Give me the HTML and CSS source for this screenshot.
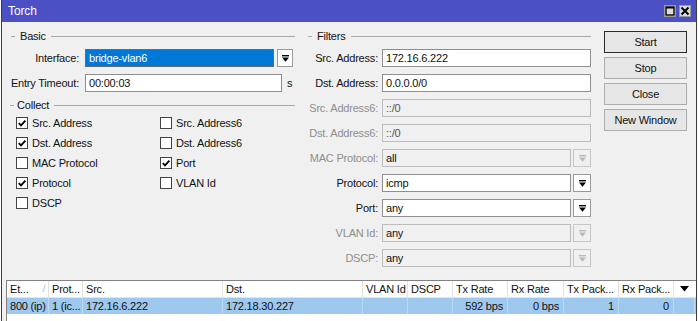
FILE: index.html
```html
<!DOCTYPE html>
<html lang="en">
<head>
    <meta charset="UTF-8">
    <meta name="viewport" content="width=device-width, initial-scale=1.0">
    <title>Torch</title>
    <link rel="stylesheet" href="styles.css">
</head>
<body>
    <div class="window">
        <div class="titlebar">
            <span class="title">Torch</span>
            <div class="title-buttons">
                <span class="tbtn"><svg width="10" height="10" viewBox="0 0 10 10"><rect x="1" y="1" width="8" height="8" fill="none" stroke="#000" stroke-width="1.4"/><line x1="1" y1="1.8" x2="9" y2="1.8" stroke="#000" stroke-width="1.4"/></svg></span>
                <span class="tbtn"><svg width="10" height="10" viewBox="0 0 10 10"><path d="M1.5 1.5 L8.5 8.5 M8.5 1.5 L1.5 8.5" stroke="#000" stroke-width="2"/></svg></span>
            </div>
        </div>

        <div class="content">
            <div class="top">
                <!-- Basic + Collect -->
                <div class="left">
                    <div class="group-title"><span>Basic</span></div>
                    <div class="form basic">
                        <label>Interface:</label>
                        <div class="field">
                            <div class="input selected iface">bridge-vlan6</div>
                            <span class="drop"><svg width="9" height="9" viewBox="0 0 9 9"><rect x="1" y="1" width="7" height="1.4"/><path d="M1 3.4 H8 L4.5 7.8 Z"/></svg></span>
                        </div>
                        <label>Entry Timeout:</label>
                        <div class="field">
                            <div class="input timeout">00:00:03</div>
                            <span class="unit">s</span>
                        </div>
                    </div>

                    <div class="group-title collect"><span>Collect</span></div>
                    <div class="checks">
                        <div class="check"><span class="box"><svg width="10" height="10" viewBox="0 0 10 10"><path d="M1.8 5.2 L4 7.4 L8.4 2.6" fill="none" stroke="#000" stroke-width="1.8"/></svg></span>Src. Address</div>
                        <div class="check"><span class="box"></span>Src. Address6</div>
                        <div class="check"><span class="box"><svg width="10" height="10" viewBox="0 0 10 10"><path d="M1.8 5.2 L4 7.4 L8.4 2.6" fill="none" stroke="#000" stroke-width="1.8"/></svg></span>Dst. Address</div>
                        <div class="check"><span class="box"></span>Dst. Address6</div>
                        <div class="check"><span class="box"></span>MAC Protocol</div>
                        <div class="check"><span class="box"><svg width="10" height="10" viewBox="0 0 10 10"><path d="M1.8 5.2 L4 7.4 L8.4 2.6" fill="none" stroke="#000" stroke-width="1.8"/></svg></span>Port</div>
                        <div class="check"><span class="box"><svg width="10" height="10" viewBox="0 0 10 10"><path d="M1.8 5.2 L4 7.4 L8.4 2.6" fill="none" stroke="#000" stroke-width="1.8"/></svg></span>Protocol</div>
                        <div class="check"><span class="box"></span>VLAN Id</div>
                        <div class="check"><span class="box"></span>DSCP</div>
                    </div>
                </div>

                <!-- Filters -->
                <div class="filters">
                    <div class="group-title"><span>Filters</span></div>
                    <div class="form filter-form">
                        <label>Src. Address:</label>
                        <div class="field"><div class="input">172.16.6.222</div></div>

                        <label>Dst. Address:</label>
                        <div class="field"><div class="input">0.0.0.0/0</div></div>

                        <label class="off">Src. Address6:</label>
                        <div class="field"><div class="input disabled">::/0</div></div>

                        <label class="off">Dst. Address6:</label>
                        <div class="field"><div class="input disabled">::/0</div></div>

                        <label class="off">MAC Protocol:</label>
                        <div class="field">
                            <div class="input disabled dark">all</div>
                            <span class="drop off"><svg width="9" height="9" viewBox="0 0 9 9"><rect x="1" y="1" width="7" height="1.4"/><path d="M1 3.4 H8 L4.5 7.8 Z"/></svg></span>
                        </div>

                        <label>Protocol:</label>
                        <div class="field">
                            <div class="input">icmp</div>
                            <span class="drop"><svg width="9" height="9" viewBox="0 0 9 9"><rect x="1" y="1" width="7" height="1.4"/><path d="M1 3.4 H8 L4.5 7.8 Z"/></svg></span>
                        </div>

                        <label>Port:</label>
                        <div class="field">
                            <div class="input">any</div>
                            <span class="drop"><svg width="9" height="9" viewBox="0 0 9 9"><rect x="1" y="1" width="7" height="1.4"/><path d="M1 3.4 H8 L4.5 7.8 Z"/></svg></span>
                        </div>

                        <label class="off">VLAN Id:</label>
                        <div class="field">
                            <div class="input disabled dark">any</div>
                            <span class="drop off"><svg width="9" height="9" viewBox="0 0 9 9"><rect x="1" y="1" width="7" height="1.4"/><path d="M1 3.4 H8 L4.5 7.8 Z"/></svg></span>
                        </div>

                        <label class="off">DSCP:</label>
                        <div class="field">
                            <div class="input disabled dark">any</div>
                            <span class="drop off"><svg width="9" height="9" viewBox="0 0 9 9"><rect x="1" y="1" width="7" height="1.4"/><path d="M1 3.4 H8 L4.5 7.8 Z"/></svg></span>
                        </div>
                    </div>
                </div>

                <!-- Buttons -->
                <div class="actions">
                    <button class="btn default">Start</button>
                    <button class="btn">Stop</button>
                    <button class="btn">Close</button>
                    <button class="btn">New Window</button>
                </div>
            </div>

            <!-- Results -->
            <div class="table">
                <div class="row head">
                    <div class="cell">Et...<span class="sort">/</span></div>
                    <div class="cell">Prot...</div>
                    <div class="cell">Src.</div>
                    <div class="cell">Dst.</div>
                    <div class="cell">VLAN Id</div>
                    <div class="cell">DSCP</div>
                    <div class="cell">Tx Rate</div>
                    <div class="cell">Rx Rate</div>
                    <div class="cell">Tx Pack...</div>
                    <div class="cell">Rx Pack...</div>
                    <div class="cell menu"><svg width="9" height="6" viewBox="0 0 9 6"><path d="M0 0 H9 L4.5 5.5 Z"/></svg></div>
                </div>
                <div class="row data">
                    <div class="cell">800 (ip)</div>
                    <div class="cell">1 (ic...</div>
                    <div class="cell">172.16.6.222</div>
                    <div class="cell">172.18.30.227</div>
                    <div class="cell"></div>
                    <div class="cell"></div>
                    <div class="cell num">592 bps</div>
                    <div class="cell num">0 bps</div>
                    <div class="cell num">1</div>
                    <div class="cell num">0</div>
                    <div class="cell"></div>
                </div>
            </div>
        </div>
    </div>
</body>
</html>
```

FILE: styles.css
```css
html, body {
    margin: 0;
    height: 100%;
    overflow: hidden;
    background: #fff;
}
body {
    font-family: "Liberation Sans", Arial, sans-serif;
    font-size: 11px;
    letter-spacing: -0.2px;
    color: #111;
}
.window {
    margin-left: 1px;
    width: 696px;
    height: 321px;
    box-sizing: border-box;
    border-left: 1px solid #3c3c3c;
    border-right: 1px solid #3c3c3c;
    background: #f0f0f0;
    overflow: hidden;
}
.titlebar {
    height: 22px;
    background: #4b50c4;
    display: flex;
    align-items: center;
    justify-content: space-between;
    padding: 0 5px 0 6px;
}
.title {
    color: #fff;
    font-size: 12px;
    letter-spacing: -0.1px;
}
.title-buttons {
    display: flex;
    gap: 3px;
}
.tbtn {
    width: 12px;
    height: 12px;
    box-sizing: border-box;
    background: #dcdcdc;
    border: 1px solid #9a9a9a;
    display: flex;
    align-items: center;
    justify-content: center;
}
.content {
    padding-top: 8px;
}
.top {
    display: flex;
    padding-left: 6px;
}
.left {
    width: 287px;
}
.filters {
    width: 286px;
    margin-left: 10px;
}
.actions {
    width: 83px;
    margin-left: 13px;
    margin-top: 1px;
    display: flex;
    flex-direction: column;
    gap: 4px;
}

/* group headings */
.group-title {
    display: flex;
    align-items: center;
    height: 12px;
    line-height: 12px;
}
.group-title::before {
    content: "";
    width: 4px;
    border-top: 1px solid #a8a8a8;
    margin: 0 5px 0 3px;
}
.group-title::after {
    content: "";
    flex: 1;
    border-top: 1px solid #a8a8a8;
    margin-left: 5px;
}
.group-title.collect {
    margin-top: 7px;
}
.group-title.collect::before {
    margin: 0 3px 0 2px;
}

/* forms */
.form {
    display: grid;
    row-gap: 7px;
    margin-top: 7px;
}
.basic {
    grid-template-columns: 71px 1fr;
    column-gap: 6px;
}
.filter-form {
    grid-template-columns: 73px 1fr;
    column-gap: 4px;
}
.form label {
    text-align: right;
    line-height: 18px;
    white-space: nowrap;
}
.form label.off {
    color: #8e8e8e;
}
.field {
    display: flex;
    align-items: center;
    height: 18px;
}
.input {
    flex: 1;
    height: 18px;
    box-sizing: border-box;
    border: 1px solid #8f8f8f;
    background: #fff;
    padding-left: 3px;
    line-height: 16px;
    white-space: nowrap;
}
.input.iface {
    flex: none;
    width: 189px;
}
.input.timeout {
    flex: none;
    width: 197px;
}
.input.selected {
    background: #0078d7;
    color: #fff;
    border-color: #6a6a6a;
}
.input.disabled {
    background: #f0f0f0;
    border-color: #bcbcbc;
    color: #555;
}
.input.disabled.dark {
    color: #111;
}
.unit {
    margin-left: 5px;
}
.drop {
    width: 18px;
    height: 18px;
    box-sizing: border-box;
    margin-left: 2px;
    border: 1px solid #9a9a9a;
    background: #fff;
    display: flex;
    align-items: center;
    justify-content: center;
    fill: #000;
}
.basic .drop {
    width: 16px;
    margin-left: 3px;
}
.drop.off {
    border-color: #c6c6c6;
    background: #f0f0f0;
    fill: #b8b8b8;
}

/* checkboxes */
.checks {
    display: grid;
    grid-template-columns: 144px 144px;
    grid-auto-rows: 20px;
    padding-left: 8px;
    margin-top: 2px;
}
.check {
    display: flex;
    align-items: center;
    gap: 4px;
}
.box {
    width: 12px;
    height: 12px;
    box-sizing: border-box;
    border: 1px solid #444;
    background: #fff;
    display: flex;
    align-items: center;
    justify-content: center;
}

/* buttons */
.btn {
    height: 22px;
    box-sizing: border-box;
    font-family: inherit;
    font-size: 11px;
    letter-spacing: -0.2px;
    color: #111;
    background: #e6e6e6;
    border: 1px solid #adadad;
    padding: 0;
}
.btn.default {
    border-color: #2b2b2b;
}

/* table */
.table {
    margin: 13px 0 0 4px;
    height: 41px;
    box-sizing: border-box;
    background: #fff;
    border-top: 1px solid #828282;
    border-left: 1px solid #828282;
}
.row {
    display: grid;
    grid-template-columns: 42px 34px 140px 140px 45px 45px 55px 56px 55px 55px 21px;
}
.row.head {
    height: 16px;
    border-bottom: 1px solid #e4e4e4;
}
.row.data {
    height: 16px;
    background: #9fc8ef;
}
.cell {
    padding-left: 3px;
    line-height: 16px;
    white-space: nowrap;
    overflow: hidden;
    border-right: 1px solid #e2e2e2;
    display: flex;
}
.row.data .cell {
    border-right-color: #bcd8f3;
}
.cell.num {
    justify-content: flex-end;
    padding-right: 4px;
}
.sort {
    margin-left: auto;
    margin-right: 3px;
    color: #b0b0b0;
    font-size: 9px;
}
.cell.menu {
    border-right: none;
    align-items: center;
    justify-content: center;
    padding-left: 0;
}
```
